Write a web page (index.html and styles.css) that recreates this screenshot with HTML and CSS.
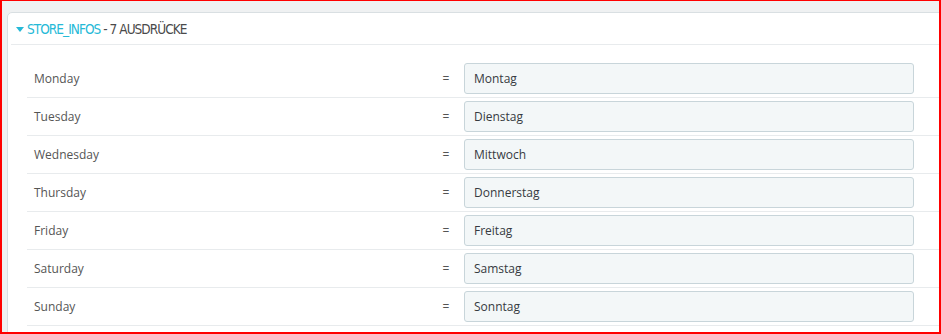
FILE: index.html
```html
<!DOCTYPE html>
<html>
<head>
<meta charset="utf-8">
<link rel="stylesheet" href="styles.css">
</head>
<body>
<div class="frame">
  <div class="panel">
    <div class="panel-heading">
      <span class="caret"></span><span class="domain">STORE_INFOS</span><span class="count"> - 7 AUSDRÜCKE</span>
    </div>
    <div class="rows">
      <div class="row"><span class="label">Monday</span><span class="eq">=</span><div class="input">Montag</div></div>
      <div class="row"><span class="label">Tuesday</span><span class="eq">=</span><div class="input">Dienstag</div></div>
      <div class="row"><span class="label">Wednesday</span><span class="eq">=</span><div class="input">Mittwoch</div></div>
      <div class="row"><span class="label">Thursday</span><span class="eq">=</span><div class="input">Donnerstag</div></div>
      <div class="row"><span class="label">Friday</span><span class="eq">=</span><div class="input">Freitag</div></div>
      <div class="row"><span class="label">Saturday</span><span class="eq">=</span><div class="input">Samstag</div></div>
      <div class="row"><span class="label">Sunday</span><span class="eq">=</span><div class="input">Sonntag</div></div>
    </div>
  </div>
</div>
</body>
</html>
```
FILE: styles.css
```css
html, body {
  margin: 0;
  padding: 0;
  background: #ffffff;
}
.frame {
  box-sizing: border-box;
  width: 941px;
  height: 334px;
  border-style: solid;
  border-color: #ff0000;
  border-width: 1px 2px 2px 2px;
  background: #eff1f2;
  overflow: hidden;
  padding: 11px 0 0 5px;
  font-family: "Open Sans", sans-serif;
}
.panel {
  width: 980px;
  height: 400px;
  background: #ffffff;
  border: 1px solid #d9dfe2;
  border-radius: 5px;
  padding: 0 0 0 3px;
  box-sizing: border-box;
}
.panel-heading {
  height: 31px;
  border-bottom: 1px solid #e8ebed;
  display: flex;
  align-items: center;
  padding-left: 5px;
  font-family: "DejaVu Sans Condensed", "DejaVu Sans", sans-serif;
  font-size: 13.5px;
  letter-spacing: -0.95px;
  white-space: pre;
}
.caret {
  width: 0;
  height: 0;
  border-left: 4.5px solid transparent;
  border-right: 4.5px solid transparent;
  border-top: 5px solid #25b9d7;
  margin-right: 3px;
  margin-top: 1px;
}
.domain {
  color: #25b9d7;
}
.count {
  color: #4a4a4a;
}
.rows {
  margin: 15px 0 0 16px;
}
.row {
  display: grid;
  grid-template-columns: 400px 24px 6px 450px;
  align-items: center;
  padding: 3px 0 3px 7px;
  border-bottom: 1px solid #e8ebed;
  font-size: 12px;
}
.label {
  color: #555555;
}
.eq {
  color: #555555;
  text-align: center;
}
.input {
  grid-column: 4;
  box-sizing: border-box;
  height: 31px;
  border: 1px solid #c8d5da;
  border-radius: 3px;
  background: #f3f7f8;
  color: #363a41;
  padding-left: 9px;
  display: flex;
  align-items: center;
}
```
